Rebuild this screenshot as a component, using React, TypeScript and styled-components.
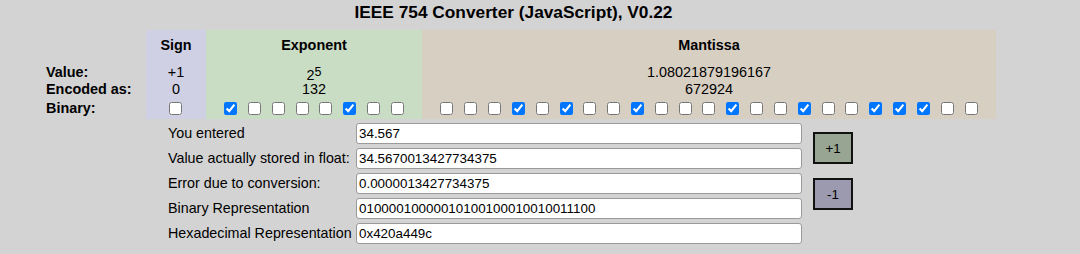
import React, { ReactElement } from 'react'
import styled, { createGlobalStyle } from 'styled-components'

const GlobalStyle = createGlobalStyle`
  html, body {
    margin: 0;
    padding: 0;
    background: #d3d3d3;
    font-family: "Liberation Sans", Arial, sans-serif;
    color: #000;
  }
`

const Page = styled.div`
  width: 1080px;
  height: 254px;
  overflow: hidden;
`

const Title = styled.h2`
  width: 1027px;
  margin: 0;
  text-align: center;
  font-size: 17.3px;
  line-height: 24px;
  font-weight: bold;
`

const BitTable = styled.div`
  display: flex;
  margin: 6px 0 0 44px;
`

const Column = styled.div<{ $bg?: string, $width: number }>`
  display: flex;
  flex-direction: column;
  width: ${p => p.$width}px;
  background: ${p => p.$bg || 'transparent'};
`

const Cell = styled.div<{ $height: number, $bold?: boolean, $left?: boolean }>`
  height: ${p => p.$height}px;
  line-height: ${p => p.$height}px;
  display: flex;
  align-items: center;
  justify-content: ${p => (p.$left ? 'flex-start' : 'center')};
  padding-left: ${p => (p.$left ? '2px' : '0')};
  font-size: 14.4px;
  font-weight: ${p => (p.$bold ? 'bold' : 'normal')};
  white-space: nowrap;
`

const Sup = styled.sup`
  font-size: 12.5px;
  line-height: 0;
  position: relative;
  top: -1px;
`

const Base = styled.span`
  position: relative;
  top: 3px;
`

const Bits = styled.div`
  display: flex;
  justify-content: center;
  align-items: center;
  height: 21px;
`

const Bit = styled.div`
  width: 23.83px;
  display: flex;
  justify-content: center;
`

const Check = styled.input`
  margin: 0;
  width: 13px;
  height: 13px;
`

const Results = styled.div`
  display: flex;
  margin: 4px 0 0 168px;
`

const Fields = styled.div`
  display: grid;
  grid-template-columns: 188px 446px;
  grid-auto-rows: 21px;
  row-gap: 4px;
`

const Label = styled.div`
  font-size: 14.3px;
  line-height: 21px;
  white-space: nowrap;
`

const Field = styled.input`
  box-sizing: border-box;
  width: 446px;
  height: 21px;
  margin: 0;
  padding: 0 2px;
  border: 1px solid #9a9a9a;
  border-radius: 3px;
  background: #fff;
  font-family: "Liberation Sans", Arial, sans-serif;
  font-size: 13.4px;
  color: #000;
`

const Buttons = styled.div`
  display: flex;
  flex-direction: column;
  gap: 14px;
  margin: 9px 0 0 11px;
`

const StepButton = styled.button<{ $bg: string }>`
  box-sizing: border-box;
  width: 40px;
  height: 32px;
  padding: 0;
  border: 2.5px solid #111;
  background: ${p => p.$bg};
  font-family: "Liberation Sans", Arial, sans-serif;
  font-size: 13.3px;
  color: #000;
`

const BitRow = ({ bits }: { bits: string }) => (
  <Bits>
    {bits.split('').map((b, i) => (
      <Bit key={i}>
        <Check type="checkbox" defaultChecked={b === '1'} />
      </Bit>
    ))}
  </Bits>
)

const App = (): ReactElement => {
  const binary = '01000010000010100100010010011100'
  const rows = [
    ['You entered', '34.567'],
    ['Value actually stored in float:', '34.5670013427734375'],
    ['Error due to conversion:', '0.0000013427734375'],
    ['Binary Representation', binary],
    ['Hexadecimal Representation', '0x420a449c'],
  ]

  return (
    <Page>
      <GlobalStyle />
      <Title>IEEE 754 Converter (JavaScript), V0.22</Title>
      <BitTable>
        <Column $width={102}>
          <Cell $height={34} />
          <Cell $height={17} $bold $left>Value:</Cell>
          <Cell $height={17} $bold $left>Encoded as:</Cell>
          <Cell $height={21} $bold $left>Binary:</Cell>
        </Column>
        <Column $width={60} $bg="#d0d0e5">
          <Cell $height={30} $bold>Sign</Cell>
          <Cell $height={4} />
          <Cell $height={17}>+1</Cell>
          <Cell $height={17}>0</Cell>
          <BitRow bits={binary.slice(0, 1)} />
        </Column>
        <Column $width={216} $bg="#c9dcc4">
          <Cell $height={30} $bold>Exponent</Cell>
          <Cell $height={4} />
          <Cell $height={17}><Base>2</Base><Sup>5</Sup></Cell>
          <Cell $height={17}>132</Cell>
          <BitRow bits={binary.slice(1, 9)} />
        </Column>
        <Column $width={574} $bg="#d8cfc3">
          <Cell $height={30} $bold>Mantissa</Cell>
          <Cell $height={4} />
          <Cell $height={17}>1.08021879196167</Cell>
          <Cell $height={17}>672924</Cell>
          <BitRow bits={binary.slice(9)} />
        </Column>
      </BitTable>
      <Results>
        <Fields>
          {rows.map(([label, value]) => (
            <React.Fragment key={label}>
              <Label>{label}</Label>
              <Field type="text" defaultValue={value} />
            </React.Fragment>
          ))}
        </Fields>
        <Buttons>
          <StepButton $bg="#99a593">+1</StepButton>
          <StepButton $bg="#9b9aae">-1</StepButton>
        </Buttons>
      </Results>
    </Page>
  )
}

export default App
